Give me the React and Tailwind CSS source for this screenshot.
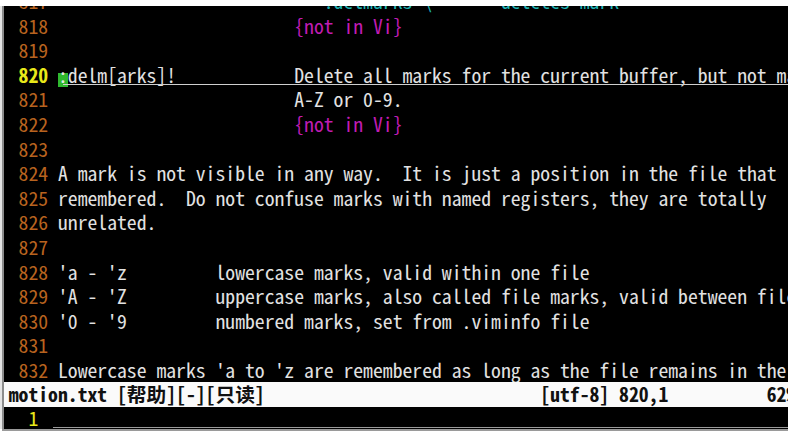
const lines = [
  { n: "817", parts: [["                           :delmarks \\\"      deletes mark \"", "text-[#1fb3b3]"]] },
  { n: "818", parts: [["                        ", ""], ["{not in Vi}", "text-[#c01cb4]"]] },
  { n: "819", parts: [] },
  { n: "820", cur: true, parts: [["delm[arks]!            Delete all marks for the current buffer, but not marks", "text-[#e2e2e2]"]] },
  { n: "821", parts: [["                        A-Z or 0-9.", "text-[#e2e2e2]"]] },
  { n: "822", parts: [["                        ", ""], ["{not in Vi}", "text-[#c01cb4]"]] },
  { n: "823", parts: [] },
  { n: "824", parts: [["A mark is not visible in any way.  It is just a position in the file that is", "text-[#e2e2e2]"]] },
  { n: "825", parts: [["remembered.  Do not confuse marks with named registers, they are totally", "text-[#e2e2e2]"]] },
  { n: "826", parts: [["unrelated.", "text-[#e2e2e2]"]] },
  { n: "827", parts: [] },
  { n: "828", parts: [["'a - 'z         lowercase marks, valid within one file", "text-[#e2e2e2]"]] },
  { n: "829", parts: [["'A - 'Z         uppercase marks, also called file marks, valid between files", "text-[#e2e2e2]"]] },
  { n: "830", parts: [["'0 - '9         numbered marks, set from .viminfo file", "text-[#e2e2e2]"]] },
  { n: "831", parts: [] },
  { n: "832", parts: [["Lowercase marks 'a to 'z are remembered as long as the file remains in the", "text-[#e2e2e2]"]] },
];

function Row({ line }) {
  return (
    <div className="relative flex h-[24.6px] leading-[24.6px] whitespace-pre">
      <span className={line.cur ? "text-[#e8e81a] font-bold" : "text-[#b8631f]"}>{` ${line.n} `}</span>
      {line.cur && (
        <span className="relative inline-block h-[24.6px]">
          <span className="absolute left-0 right-0 top-[10.5px] h-[14px] bg-[#2fb82f]" />
          <span className="relative text-[#e8e8e8]">:</span>
        </span>
      )}
      {line.parts.map(([t, c], i) => (
        <span key={i} className={c}>{t}</span>
      ))}
      {line.cur && <div className="absolute left-[54px] right-0 top-[21px] h-px bg-[#cfcfcf]" />}
    </div>
  );
}

export default function App() {
  return (
    <div className="w-[793px] h-[433px] bg-white overflow-hidden flex flex-col font-['Noto_Sans_Mono_CJK_SC','DejaVu_Sans_Mono',monospace] text-[19.7px]">
      <div className="h-[6px] shrink-0" />
      <div className="flex h-[423px]">
        <div className="w-[2px] bg-[#e4e4e4]" />
        <div className="w-[2px] bg-[#8c8c8c]" />
        <div className="w-[784px] bg-black flex flex-col overflow-hidden pl-[4.75px]">
          <div className="h-[376.7px] overflow-hidden">
            <div className="mt-[-16.9px]">
              {lines.map((l) => (
                <Row key={l.n} line={l} />
              ))}
            </div>
          </div>
          <div className="-ml-[4.75px] pl-[4.75px] h-[24.6px] leading-[24.6px] bg-[#fafafa] text-[#111] font-bold whitespace-pre">
            {"motion.txt [帮助][-][只读]                            [utf-8] 820,1          62%"}
          </div>
          <div className="relative h-[22px] leading-[22px] whitespace-pre">
            <span className="text-[#e8e81a]">{"  1 "}</span>
            <div className="absolute left-[44px] right-0 top-[20px] h-px bg-[#9a9a9a]" />
          </div>
        </div>
      </div>
      <div className="h-[2px] bg-[#9a9a9a] ml-[2px] w-[786px]" />
    </div>
  );
}
